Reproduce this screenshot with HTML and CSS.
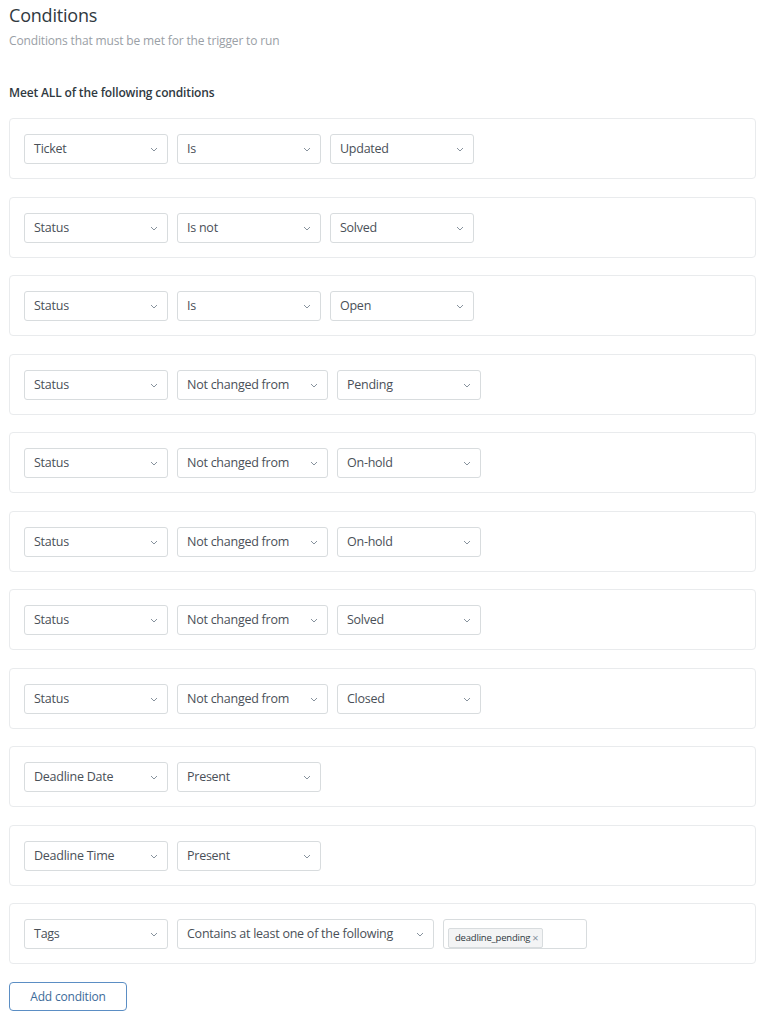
FILE: index.html
```html
<!DOCTYPE html>
<html>
<head>
<meta charset="utf-8">
<link rel="stylesheet" href="styles.css">
</head>
<body>
<div class="page">
  <h1 class="title">Conditions</h1>
  <p class="subtitle">Conditions that must be met for the trigger to run</p>
  <h2 class="meet">Meet ALL of the following conditions</h2>

  <div class="list">
    <div class="card">
      <div class="sel">Ticket<svg class="chev" viewBox="0 0 8 5"><path d="M1 1l3 3 3-3"/></svg></div>
      <div class="sel">Is<svg class="chev" viewBox="0 0 8 5"><path d="M1 1l3 3 3-3"/></svg></div>
      <div class="sel">Updated<svg class="chev" viewBox="0 0 8 5"><path d="M1 1l3 3 3-3"/></svg></div>
    </div>
    <div class="card">
      <div class="sel">Status<svg class="chev" viewBox="0 0 8 5"><path d="M1 1l3 3 3-3"/></svg></div>
      <div class="sel">Is not<svg class="chev" viewBox="0 0 8 5"><path d="M1 1l3 3 3-3"/></svg></div>
      <div class="sel">Solved<svg class="chev" viewBox="0 0 8 5"><path d="M1 1l3 3 3-3"/></svg></div>
    </div>
    <div class="card">
      <div class="sel">Status<svg class="chev" viewBox="0 0 8 5"><path d="M1 1l3 3 3-3"/></svg></div>
      <div class="sel">Is<svg class="chev" viewBox="0 0 8 5"><path d="M1 1l3 3 3-3"/></svg></div>
      <div class="sel">Open<svg class="chev" viewBox="0 0 8 5"><path d="M1 1l3 3 3-3"/></svg></div>
    </div>
    <div class="card">
      <div class="sel">Status<svg class="chev" viewBox="0 0 8 5"><path d="M1 1l3 3 3-3"/></svg></div>
      <div class="sel sel-m">Not changed from<svg class="chev" viewBox="0 0 8 5"><path d="M1 1l3 3 3-3"/></svg></div>
      <div class="sel">Pending<svg class="chev" viewBox="0 0 8 5"><path d="M1 1l3 3 3-3"/></svg></div>
    </div>
    <div class="card">
      <div class="sel">Status<svg class="chev" viewBox="0 0 8 5"><path d="M1 1l3 3 3-3"/></svg></div>
      <div class="sel sel-m">Not changed from<svg class="chev" viewBox="0 0 8 5"><path d="M1 1l3 3 3-3"/></svg></div>
      <div class="sel">On-hold<svg class="chev" viewBox="0 0 8 5"><path d="M1 1l3 3 3-3"/></svg></div>
    </div>
    <div class="card">
      <div class="sel">Status<svg class="chev" viewBox="0 0 8 5"><path d="M1 1l3 3 3-3"/></svg></div>
      <div class="sel sel-m">Not changed from<svg class="chev" viewBox="0 0 8 5"><path d="M1 1l3 3 3-3"/></svg></div>
      <div class="sel">On-hold<svg class="chev" viewBox="0 0 8 5"><path d="M1 1l3 3 3-3"/></svg></div>
    </div>
    <div class="card">
      <div class="sel">Status<svg class="chev" viewBox="0 0 8 5"><path d="M1 1l3 3 3-3"/></svg></div>
      <div class="sel sel-m">Not changed from<svg class="chev" viewBox="0 0 8 5"><path d="M1 1l3 3 3-3"/></svg></div>
      <div class="sel">Solved<svg class="chev" viewBox="0 0 8 5"><path d="M1 1l3 3 3-3"/></svg></div>
    </div>
    <div class="card">
      <div class="sel">Status<svg class="chev" viewBox="0 0 8 5"><path d="M1 1l3 3 3-3"/></svg></div>
      <div class="sel sel-m">Not changed from<svg class="chev" viewBox="0 0 8 5"><path d="M1 1l3 3 3-3"/></svg></div>
      <div class="sel">Closed<svg class="chev" viewBox="0 0 8 5"><path d="M1 1l3 3 3-3"/></svg></div>
    </div>
    <div class="card">
      <div class="sel">Deadline Date<svg class="chev" viewBox="0 0 8 5"><path d="M1 1l3 3 3-3"/></svg></div>
      <div class="sel">Present<svg class="chev" viewBox="0 0 8 5"><path d="M1 1l3 3 3-3"/></svg></div>
    </div>
    <div class="card">
      <div class="sel">Deadline Time<svg class="chev" viewBox="0 0 8 5"><path d="M1 1l3 3 3-3"/></svg></div>
      <div class="sel">Present<svg class="chev" viewBox="0 0 8 5"><path d="M1 1l3 3 3-3"/></svg></div>
    </div>
    <div class="card">
      <div class="sel">Tags<svg class="chev" viewBox="0 0 8 5"><path d="M1 1l3 3 3-3"/></svg></div>
      <div class="sel sel-xl">Contains at least one of the following<svg class="chev" viewBox="0 0 8 5"><path d="M1 1l3 3 3-3"/></svg></div>
      <div class="tags"><span class="chip">deadline_pending<span class="x">×</span></span></div>
    </div>
  </div>

  <button class="add">Add condition</button>
</div>
</body>
</html>
```

FILE: styles.css
```css
* { box-sizing: border-box; }
html, body {
  margin: 0;
  padding: 0;
  background: #fff;
}
body {
  font-family: "Open Sans", "Noto Sans", "Liberation Sans", sans-serif;
  color: #2f3941;
}
.page {
  width: 756px;
  padding: 4px 0 0 9px;
}
.title {
  margin: 0;
  font-size: 18px;
  line-height: 22px;
  font-weight: 400;
  color: #2f3941;
  letter-spacing: -0.2px;
}
.subtitle {
  margin: 6px 0 0;
  font-size: 12px;
  line-height: 18px;
  color: #9aa0a6;
  letter-spacing: -0.15px;
}
.meet {
  margin: 34px 0 0;
  font-size: 12px;
  line-height: 18px;
  font-weight: 600;
  color: #2f3941;
  letter-spacing: -0.15px;
}
.list {
  margin-top: 16px;
  display: flex;
  flex-direction: column;
  gap: 17.5px;
}
.card {
  height: 61px;
  border: 1px solid #e9ebed;
  border-radius: 4px;
  padding: 15px 14px 14px;
  display: flex;
  gap: 9px;
}
.sel {
  position: relative;
  width: 144px;
  height: 30px;
  border: 1px solid #d8dcde;
  border-radius: 3px;
  padding: 0 30px 0 9px;
  font-size: 12.5px;
  line-height: 28px;
  color: #4a5058;
  white-space: nowrap;
  letter-spacing: -0.25px;
}
.sel-m { width: 151px; }
.sel-xl { width: 257px; }
.chev {
  position: absolute;
  right: 9px;
  top: 12px;
  width: 8px;
  height: 5px;
  fill: none;
  stroke: #87929d;
  stroke-width: 1;
}
.tags {
  width: 144px;
  height: 30px;
  border: 1px solid #d8dcde;
  border-radius: 3px;
  padding: 4px 4px;
}
.chip {
  display: inline-flex;
  align-items: center;
  height: 20px;
  padding: 0 4px 0 6px;
  background: #f3f4f5;
  border: 1px solid #d8dcde;
  border-radius: 2px;
  font-size: 9.5px;
  color: #2f3941;
  letter-spacing: -0.2px;
}
.chip .x {
  margin-left: 2px;
  font-size: 11px;
  color: #87929d;
}
.add {
  margin-top: 18px;
  width: 118px;
  height: 29px;
  border: 1px solid #5b8ec4;
  border-radius: 4px;
  background: #fff;
  font-family: "Open Sans", "Noto Sans", "Liberation Sans", sans-serif;
  font-size: 12px;
  color: #3d6b99;
  letter-spacing: -0.2px;
  padding: 0;
}
```
